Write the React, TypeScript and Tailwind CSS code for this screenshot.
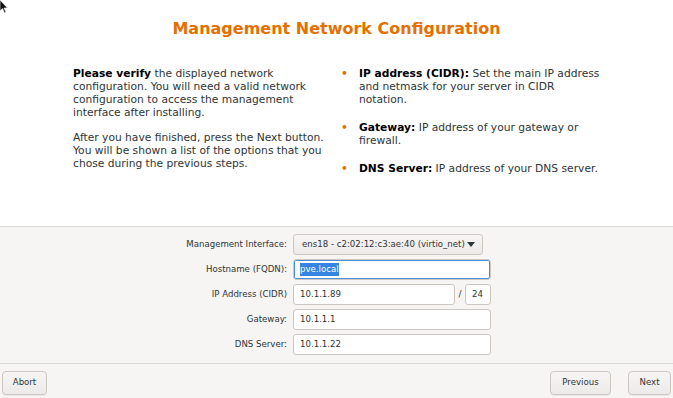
import React from 'react';

const Field: React.FC<{ label: string; children: React.ReactNode }> = ({ label, children }) => (
  <>
    <div className="flex items-center justify-end text-[8.6px] text-[#2e3436]">{label}</div>
    <div className="flex items-center">{children}</div>
  </>
);

const inputCls =
  'h-[21px] bg-white border border-[#cdc7c2] rounded-[3px] px-[6px] flex items-center text-[8.6px] text-[#2e3436]';

const Btn: React.FC<{ children: React.ReactNode; w: string }> = ({ children, w }) => (
  <button
    className={`${w} h-[24px] rounded-[4px] border border-[#cdc7c2] bg-gradient-to-b from-[#f6f5f4] to-[#edebe9] text-[8.6px] text-[#2e3436] shadow-[0_1px_0_rgba(0,0,0,0.05)]`}
  >
    {children}
  </button>
);

const Bullet = () => <span className="w-[18px] shrink-0 text-[#e57000] font-bold">•</span>;

export default function App() {
  return (
    <div
      className="relative w-[673px] h-[398px] flex flex-col bg-[#f6f5f4] overflow-hidden"
      style={{ fontFamily: '"DejaVu Sans", "Liberation Sans", sans-serif' }}
    >
      {/* mouse pointer */}
      <svg className="absolute left-0 top-0" width="8" height="14" viewBox="0 0 8 14">
        <path d="M0 0 L0 11 L2.5 8.5 L4.5 13 L6 12.3 L4 8 L7.5 8 Z" fill="#111" stroke="#fff" strokeWidth="0.6" />
      </svg>

      <div className="h-[227px] bg-white border-b border-[#dcdad5] flex flex-col">
        <h1 className="pt-[19px] text-center text-[16px] font-bold text-[#e57000] leading-[20px]">
          Management Network Configuration
        </h1>
        <div className="flex pt-[28px] pl-[73px] text-[10.7px] leading-[13px] text-[#2e3436]">
          <div className="w-[255px]">
            <p>
              <b className="text-black">Please verify</b> the displayed network configuration. You will need a valid
              network configuration to access the management interface after installing.
            </p>
            <p className="mt-[12px]">
              After you have finished, press the Next button. You will be shown a list of the options that you chose
              during the previous steps.
            </p>
          </div>
          <ul className="ml-[13px] flex flex-col gap-[15px]">
            <li className="flex">
              <Bullet />
              <span className="w-[243px]">
                <b className="text-black">IP address (CIDR):</b> Set the main IP address and netmask for your server in
                CIDR notation.
              </span>
            </li>
            <li className="flex">
              <Bullet />
              <span className="w-[243px]">
                <b className="text-black">Gateway:</b> IP address of your gateway or firewall.
              </span>
            </li>
            <li className="flex">
              <Bullet />
              <span className="w-[243px]">
                <b className="text-black">DNS Server:</b> IP address of your DNS server.
              </span>
            </li>
          </ul>
        </div>
      </div>

      <div className="flex-1 pt-[7px]">
        <div className="grid grid-cols-[287px_198px] gap-x-[6px] gap-y-[4px] auto-rows-[21px]">
          <Field label="Management Interface:">
            <div className="h-[21px] w-[190px] rounded-[3px] border border-[#cdc7c2] bg-gradient-to-b from-[#f6f5f4] to-[#edebe9] flex items-center justify-between pl-[8px] pr-[7px] text-[8.6px] text-[#2e3436]">
              <span>ens18 - c2:02:12:c3:ae:40 (virtio_net)</span>
              <svg width="8" height="5" viewBox="0 0 8 5">
                <path d="M0 0 H8 L4 5 Z" fill="#2e3436" />
              </svg>
            </div>
          </Field>
          <Field label="Hostname (FQDN):">
            <div className={`${inputCls} w-[198px] border-[#4a90d9] shadow-[inset_0_0_0_1px_#4a90d9]`}>
              <span className="bg-[#3584e4] text-white">pve.local</span>
            </div>
          </Field>
          <Field label="IP Address (CIDR)">
            <div className={`${inputCls} w-[162px]`}>10.1.1.89</div>
            <span className="w-[10px] text-center text-[9px] text-[#2e3436]">/</span>
            <div className={`${inputCls} w-[26px] px-[5px]`}>24</div>
          </Field>
          <Field label="Gateway:">
            <div className={`${inputCls} w-[198px]`}>10.1.1.1</div>
          </Field>
          <Field label="DNS Server:">
            <div className={`${inputCls} w-[198px]`}>10.1.1.22</div>
          </Field>
        </div>
      </div>

      <div className="h-[35px] border-t border-[#dcdad5] flex items-center px-[2px] pt-[3px]">
        <Btn w="w-[45px]">Abort</Btn>
        <div className="flex-1" />
        <Btn w="w-[61px]">Previous</Btn>
        <div className="w-[17px]" />
        <Btn w="w-[43px]">Next</Btn>
      </div>
    </div>
  );
}
